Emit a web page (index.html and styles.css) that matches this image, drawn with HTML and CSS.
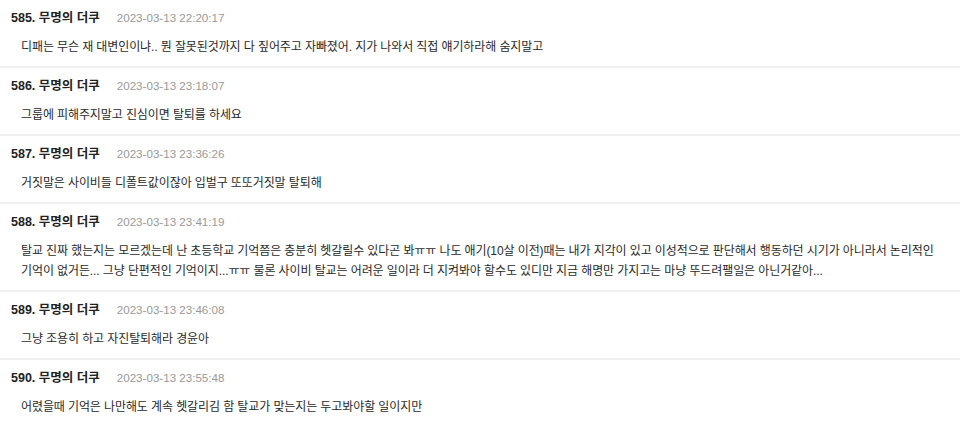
FILE: index.html
```html
<!DOCTYPE html>
<html lang="ko">
<head>
<meta charset="utf-8">
<link rel="stylesheet" href="styles.css">
</head>
<body>
<ul class="list">
  <li class="item">
    <div class="head"><span class="num">585. 무명의 더쿠</span><span class="date">2023-03-13 22:20:17</span></div>
    <p class="text">디패는 무슨 재 대변인이냐.. 뭔 잘못된것까지 다 짚어주고 자빠졌어. 지가 나와서 직접 얘기하라해 숨지말고</p>
  </li>
  <li class="item">
    <div class="head"><span class="num">586. 무명의 더쿠</span><span class="date">2023-03-13 23:18:07</span></div>
    <p class="text">그룹에 피해주지말고 진심이면 탈퇴를 하세요</p>
  </li>
  <li class="item">
    <div class="head"><span class="num">587. 무명의 더쿠</span><span class="date">2023-03-13 23:36:26</span></div>
    <p class="text">거짓말은 사이비들 디폴트값이잖아 입벌구 또또거짓말 탈퇴해</p>
  </li>
  <li class="item">
    <div class="head"><span class="num">588. 무명의 더쿠</span><span class="date">2023-03-13 23:41:19</span></div>
    <p class="text">탈교 진짜 했는지는 모르겠는데 난 초등학교 기억쯤은 충분히 헷갈릴수 있다곤 봐ㅠㅠ 나도 애기(10살 이전)때는 내가 지각이 있고 이성적으로 판단해서 행동하던 시기가 아니라서 논리적인 기억이 없거든... 그냥 단편적인 기억이지...ㅠㅠ 물론 사이비 탈교는 어려운 일이라 더 지켜봐야 할수도 있디만 지금 해명만 가지고는 마냥 뚜드려팰일은 아닌거같아...</p>
  </li>
  <li class="item">
    <div class="head"><span class="num">589. 무명의 더쿠</span><span class="date">2023-03-13 23:46:08</span></div>
    <p class="text">그냥 조용히 하고 자진탈퇴해라 경윤아</p>
  </li>
  <li class="item">
    <div class="head"><span class="num">590. 무명의 더쿠</span><span class="date">2023-03-13 23:55:48</span></div>
    <p class="text">어렸을때 기억은 나만해도 계속 헷갈리김 함 탈교가 맞는지는 두고봐야할 일이지만</p>
  </li>
</ul>
</body>
</html>
```

FILE: styles.css
```css
html, body {
  margin: 0;
  padding: 0;
  background: #ffffff;
}
body {
  font-family: "Liberation Sans", "Noto Sans CJK KR", sans-serif;
  color: #333333;
}
.list {
  list-style: none;
  margin: 0;
  padding: 0;
}
.item {
  padding: 8px 11px 9px;
  border-bottom: 2px solid #f0f0f0;
}
.head {
  display: flex;
  align-items: baseline;
  gap: 17px;
  line-height: 20px;
  height: 20px;
}
.num {
  font-size: 12.5px;
  font-weight: bold;
  color: #222222;
}
.date {
  font-size: 11.6px;
  color: #999999;
}
.text {
  margin: 9px 0 0;
  padding: 0 10px;
  font-size: 12px;
  line-height: 20px;
  letter-spacing: -0.1px;
  color: #2a2a2a;
  word-break: keep-all;
}
```
